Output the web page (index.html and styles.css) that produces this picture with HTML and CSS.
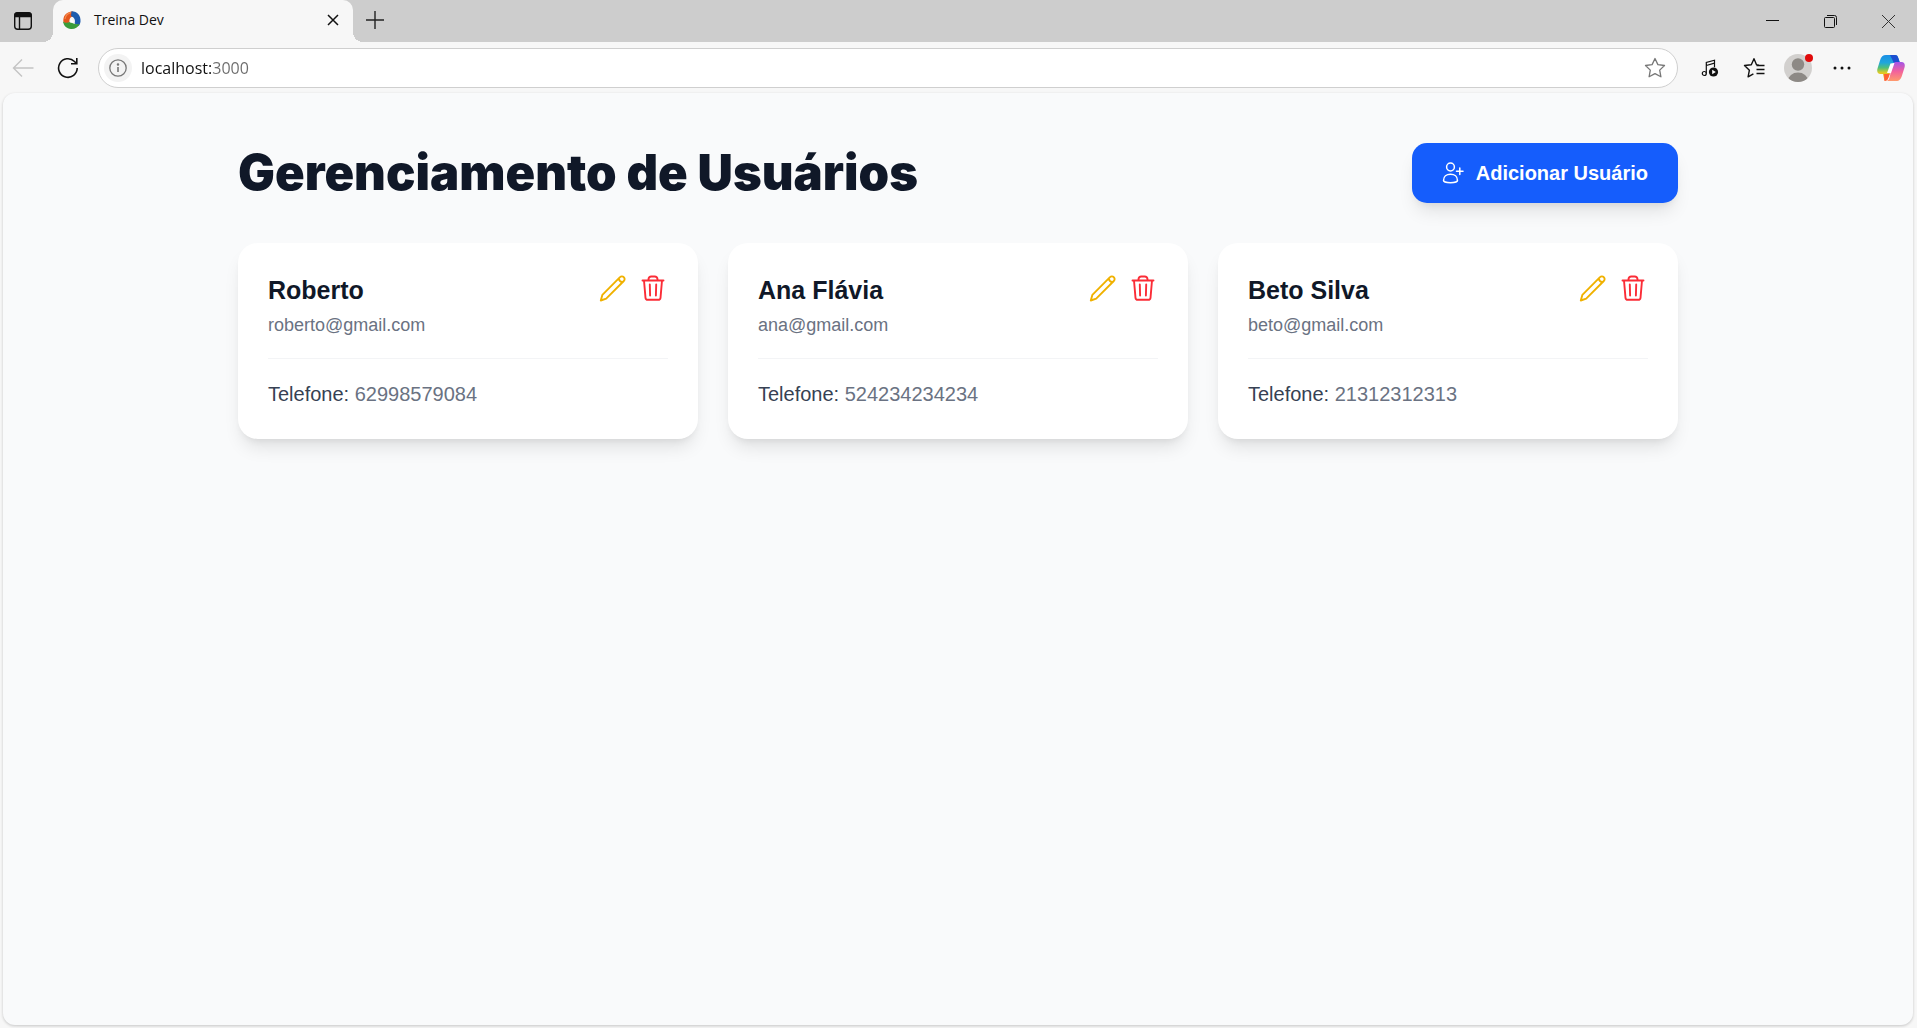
FILE: index.html
```html
<!DOCTYPE html>
<html lang="pt-BR">
<head>
<meta charset="utf-8">
<title>Treina Dev</title>
<link rel="stylesheet" href="styles.css">
</head>
<body>
<svg width="0" height="0" class="sprite" aria-hidden="true">
  <symbol id="pencil" viewBox="0 0 30 30"><path d="M2.800 27.500 4.400 21.800 22 4.200a2.600 2.600 0 0 1 3.800 0 2.600 2.600 0 0 1 0 3.800L8.200 25.600z M20.800 5.600q.5 3.200 3.900 3.700"/></symbol>
  <symbol id="trash" viewBox="0 0 30 30"><path d="M4.500 7.500h21M6 7.500l1.500 17.300a2.300 2.300 0 0 0 2.300 2h10.400a2.300 2.300 0 0 0 2.300-2l1.500-17.300M10.500 7.200v-1a2.700 2.700 0 0 1 2.700-2.700h3.600a2.700 2.700 0 0 1 2.700 2.700v1M11.800 11.500l.3 11M18.200 11.500l-.3 11"/></symbol>
</svg>
<div class="window">
  <header class="tabbar">
    <button class="chrome-btn workspace" aria-label="Guias"><svg width="20" height="20" viewBox="0 0 20 20" fill="none" stroke="#111" stroke-width="1.400"><rect x="1.700" y="1.700" width="16.600" height="16.600" rx="3"/><path d="M6.500 6v12"/><path d="M2 5.500V4a2 2 0 0 1 2-2h12a2 2 0 0 1 2 2v1.500z" fill="#111"/></svg></button>
    <div class="tab">
      <svg width="20" height="20" viewBox="0 0 20 20"><path d="M1.500 12.500C.5 6 4 2 10.500 1.200L13 7c-4-1-6 1-5.500 5.500-2 1-4 1-6 0z" fill="#e4561d"/><path d="M9.500 1.200c6 0 9.500 4.500 9 10.300-.2 2-.8 3.200-1.800 4.500l-4-2.500c1-3.500-.2-6-3.700-7.500z" fill="#1d5cae"/><path d="M1 11.500c2.500 2 5 1.200 7 .5 2.500 1.500 5.500 2.500 9.500 2-1.500 3.500-5 5.300-8.500 5C4.500 18.500 1.800 16 1 11.500z" fill="#3a9c3b"/><path d="m9.300 8.500 2.200 3.800-3.300.4z" fill="#fff"/><path d="M3 9C3.500 5.500 6 3.200 9 2.600" fill="none" stroke="#f58a4c" stroke-width="1.200"/></svg>
      <span class="tab-title">Treina Dev</span>
      <button class="chrome-btn tab-close" aria-label="Fechar guia"><svg width="12" height="12" viewBox="0 0 12 12" fill="none" stroke="#111" stroke-width="1.500"><path d="m1 1 10 10M11 1 1 11"/></svg></button>
    </div>
    <button class="chrome-btn new-tab" aria-label="Nova guia"><svg width="18" height="18" viewBox="0 0 18 18" fill="none" stroke="#222" stroke-width="1.400"><path d="M9 0v18M0 9h18"/></svg></button>
    <div class="window-controls">
      <button class="chrome-btn" aria-label="Minimizar"><svg width="13" height="13" viewBox="0 0 13 13" stroke="#111"><path d="M0 5.500h13"/></svg></button>
      <button class="chrome-btn" aria-label="Restaurar"><svg width="13" height="13" viewBox="0 0 13 13" fill="none" stroke="#111"><rect x=".5" y="2.500" width="10" height="10" rx="1"/><path d="M3 .5h7.500a2 2 0 0 1 2 2V10"/></svg></button>
      <button class="chrome-btn" aria-label="Fechar"><svg width="13" height="13" viewBox="0 0 13 13" fill="none" stroke="#333"><path d="m0 0 13 13M13 0 0 13"/></svg></button>
    </div>
  </header>
  <nav class="toolbar">
    <div class="nav-buttons">
      <button class="chrome-btn" aria-label="Voltar"><svg width="22" height="20" viewBox="0 0 22 20" fill="none" stroke="#c4c4c4" stroke-width="1.400"><path d="M21.500 10H1.500M10 1.500 1.500 10l8.500 8.500"/></svg></button>
      <button class="chrome-btn" aria-label="Atualizar"><svg width="22" height="22" viewBox="0 0 22 22" fill="none" stroke="#111" stroke-width="1.600"><path d="M20.200 11A9.300 9.300 0 1 1 17.500 4.500L19.500 6.500M19.800 1v5.700H14"/></svg></button>
    </div>
    <div class="address">
      <button class="chrome-btn site-info" aria-label="Informações do site"><svg width="18" height="18" viewBox="0 0 18 18" fill="none" stroke="#777" stroke-width="1.300"><circle cx="9" cy="9" r="8.200"/><path d="M9 8v5" stroke-width="1.600"/><circle cx="9" cy="5.500" r=".6" fill="#777"/></svg></button>
      <input class="url" type="text" value="localhost:3000" aria-label="Endereço">
      <button class="chrome-btn" aria-label="Favoritar"><svg width="22" height="22" viewBox="0 0 22 22" fill="none" stroke="#777" stroke-width="1.300" stroke-linejoin="round"><path d="m11 1.500 2.900 6.100 6.600.9-4.800 4.600 1.200 6.700L11 16.600l-5.900 3.200 1.200-6.700L1.500 8.500l6.600-.9z"/></svg></button>
    </div>
    <div class="tools">
      <button class="chrome-btn" aria-label="Mídia"><svg width="18" height="18" viewBox="0 0 18 18" fill="none" stroke="#111" stroke-width="1.200"><path d="M5.300 14.500V3.500l8.200-2.300v7M5.300 6.500l8.200-2.300"/><circle cx="3.300" cy="14.500" r="2"/><circle cx="12.500" cy="13" r="4.600" fill="#111" stroke="none"/><path d="m11.200 10.800 3.600 2.200-3.600 2.200z" fill="#fff" stroke="none"/></svg></button>
      <button class="chrome-btn" aria-label="Favoritos"><svg width="22" height="22" viewBox="0 0 22 22" fill="none" stroke="#111" stroke-width="1.400" stroke-linejoin="round"><path d="M16 8.200l-2.500-.4L11 1.700 8.300 7.700l-6.800.8 4.900 4.700-1.300 6.600 5.300-3M13.500 8.500h8M13.500 12.500h8M13.500 16.500h8"/></svg></button>
      <button class="chrome-btn" aria-label="Perfil"><span class="avatar"><svg width="28" height="28" viewBox="0 0 28 28"><defs><clipPath id="face"><circle cx="14" cy="14" r="14"/></clipPath></defs><g clip-path="url(#face)"><rect width="28" height="28" fill="#d2d0ce"/><circle cx="14" cy="10.500" r="6.200" fill="#8d8985"/><ellipse cx="14" cy="27" rx="10" ry="8.500" fill="#8d8985"/></g></svg><span class="badge"></span></span></button>
      <button class="chrome-btn" aria-label="Configurações"><svg width="18" height="18" viewBox="0 0 18 18" fill="#111"><circle cx="2" cy="9" r="1.500"/><circle cx="9" cy="9" r="1.500"/><circle cx="16" cy="9" r="1.500"/></svg></button>
      <button class="chrome-btn copilot" aria-label="Copilot"><svg width="28" height="26" viewBox="0 0 28 26"><defs><linearGradient id="ca" x1="0" y1="0" x2="0" y2="1"><stop offset="0" stop-color="#1b8fe6"/><stop offset=".3" stop-color="#1fa6dc"/><stop offset=".5" stop-color="#4fbf7a"/><stop offset=".7" stop-color="#e3cc22"/><stop offset="1" stop-color="#ff8a2a"/></linearGradient><linearGradient id="cb" x1="0" y1="0" x2="0" y2="1"><stop offset="0" stop-color="#a355e8"/><stop offset=".5" stop-color="#f2629c"/><stop offset="1" stop-color="#ff9a6c"/></linearGradient></defs><path d="M12 0h6c2 0 2.700 1.200 3.300 3L23 8h-5c-2 0-2.800 1-3.400 3L12 20c-1 4-1.800 5.500-4.500 5.500L6 19H3.500C.5 19-.3 16.500.5 13.500L3 5.500C4 1.700 6 0 9 0z" fill="url(#ca)"/><path d="M13 0h5c2 0 2.700 1.200 3.300 3L23 8h-5c-1.500 0-2-1-2.500-3z" fill="#1c4fd0"/><path d="M7 19h4c2 0 2.500-1.500 3-3l-2.500 6.500c-.7 2.500-2 3.500-4 3.500z" fill="#ff6035"/><path d="M19 7h5.500c3 0 3.800 2.500 3 5.500l-2.500 8c-1 3.500-2.500 5.500-6 5.500H9c2 0 3-1.500 3.500-3.500L15.500 11C16.200 8.500 17 7 19 7z" fill="url(#cb)"/><path d="m13.500 8.500 4-.5-3.500 10h-4z" fill="#fff"/></svg></button>
    </div>
  </nav>
  <main class="page">
    <div class="container">
      <div class="page-head">
        <h1>Gerenciamento de Usuários</h1>
        <button class="add"><svg width="22" height="22" viewBox="0 0 22 22" fill="none" stroke="#fff" stroke-width="1.500" stroke-linecap="round"><circle cx="8.500" cy="5" r="3.900"/><path d="M1.500 18.500c0-4 3-6.200 7-6.200s7 2.200 7 6.200c0 1-2.500 2.300-7 2.300s-7-1.300-7-2.300zM17.800 6v6.500M14.500 9.200h6.500"/></svg>Adicionar Usuário</button>
      </div>
      <div class="cards">
        <article class="card">
          <div class="card-head"><div><h2>Roberto</h2><p class="email">roberto@gmail.com</p></div>
            <div class="actions"><button class="edit" aria-label="Editar"><svg><use href="#pencil"/></svg></button><button class="delete" aria-label="Excluir"><svg><use href="#trash"/></svg></button></div></div>
          <p class="phone">Telefone: <span>62998579084</span></p>
        </article>
        <article class="card">
          <div class="card-head"><div><h2>Ana Flávia</h2><p class="email">ana@gmail.com</p></div>
            <div class="actions"><button class="edit" aria-label="Editar"><svg><use href="#pencil"/></svg></button><button class="delete" aria-label="Excluir"><svg><use href="#trash"/></svg></button></div></div>
          <p class="phone">Telefone: <span>524234234234</span></p>
        </article>
        <article class="card">
          <div class="card-head"><div><h2>Beto Silva</h2><p class="email">beto@gmail.com</p></div>
            <div class="actions"><button class="edit" aria-label="Editar"><svg><use href="#pencil"/></svg></button><button class="delete" aria-label="Excluir"><svg><use href="#trash"/></svg></button></div></div>
          <p class="phone">Telefone: <span>21312312313</span></p>
        </article>
      </div>
    </div>
  </main>
</div>
</body>
</html>
```
FILE: styles.css
```css
* { box-sizing: border-box; }
body { margin: 0; font-family: "Liberation Sans", Arial, sans-serif; }
h1, h2, p { margin: 0; }
button { border: 0; padding: 0; background: none; font: inherit; cursor: pointer; }
svg { display: block; flex: none; }
.sprite { position: absolute; }

.window { display: flex; flex-direction: column; min-height: 100vh; background: #f7f7f7; }

/* Browser chrome */
.chrome-btn { display: grid; place-items: center; flex: none; }
.tabbar { display: flex; align-items: stretch; height: 42px; background: #cdcdcd; font-family: "Open Sans", "Segoe UI", sans-serif; }
.workspace { width: 53px; padding-right: 7px; }
.tab { position: relative; display: flex; align-items: center; gap: 12px; width: 300px; padding: 0 14px 3px 9px; background: #f7f7f7; border-radius: 10px 10px 0 0; }
.tab::before, .tab::after { content: ""; position: absolute; bottom: 0; width: 10px; height: 10px; }
.tab::before { right: 100%; background: radial-gradient(circle at 0 0, transparent 10px, #f7f7f7 10px); }
.tab::after { left: 100%; background: radial-gradient(circle at 100% 0, transparent 10px, #f7f7f7 10px); }
.tab-title { flex: 1; font-size: 14px; color: #111; }
.new-tab { width: 44px; padding-bottom: 3px; }
.window-controls { display: flex; margin-left: auto; }
.window-controls .chrome-btn { width: 58px; }

.toolbar { display: flex; align-items: center; gap: 10px; height: 51px; padding: 0 12px; }
.nav-buttons { display: flex; gap: 23px; padding-right: 9px; }
.address { display: flex; flex: 1; align-items: center; gap: 9px; height: 40px; padding: 0 11px 0 5px; background: #fff; border: 1px solid #cfcfcf; border-radius: 20px; }
.site-info { width: 28px; height: 28px; border-radius: 50%; background: #f3f3f3; }
.url { flex: 1; min-width: 0; padding: 0; border: 0; outline: 0; font: 16px "Open Sans", "Segoe UI", sans-serif; color: transparent; background: linear-gradient(90deg, #111 72px, #6b6b6b 72px); -webkit-background-clip: text; background-clip: text; }
.tools { display: flex; align-items: center; }
.tools .chrome-btn { width: 44px; }
.tools .copilot { width: 28px; margin-left: 13px; }
.avatar { position: relative; }
.badge { position: absolute; top: 0; right: -1px; width: 8px; height: 8px; border-radius: 50%; background: #e00b0b; }

/* Page */
.page { flex: 1; margin: 0 4px 3px 3px; padding: 50px 24px; background: #f9fafb; border-radius: 12px; box-shadow: 0 1px 3px rgba(0, 0, 0, .2); }
.container { max-width: 1440px; margin: 0 auto; }
.page-head { display: flex; align-items: center; justify-content: space-between; margin-bottom: 40px; }
h1 { font: 900 49px/50px Inter, "Arial Black", sans-serif; color: #101828; }
.add { display: flex; align-items: center; gap: 12px; height: 60px; padding: 0 30px; border-radius: 15px; background: #155dfc; color: #fff; font-size: 20px; font-weight: 700; box-shadow: 0 12px 18px -4px rgba(0, 0, 0, .1), 0 5px 8px -5px rgba(0, 0, 0, .1); }

.cards { display: grid; grid-template-columns: repeat(3, 1fr); gap: 30px; }
.card { padding: 30px; border-radius: 20px; background: #fff; box-shadow: 0 12px 18px -4px rgba(0, 0, 0, .1), 0 5px 8px -5px rgba(0, 0, 0, .1); }
.card-head { display: flex; align-items: flex-start; justify-content: space-between; padding-bottom: 20px; border-bottom: 1px solid #f3f4f6; }
h2 { font-size: 25px; line-height: 35px; color: #101828; }
.email { margin-top: 5px; font-size: 18px; line-height: 25px; color: #6a7282; }
.actions { display: flex; gap: 10px; }
.actions svg { width: 30px; height: 30px; fill: none; stroke: currentColor; stroke-width: 1.9; stroke-linecap: round; stroke-linejoin: round; }
.edit { color: #f0b100; }
.delete { color: #fb2c36; }
.phone { padding-top: 20px; font-size: 20px; line-height: 30px; color: #364153; }
.phone span { color: #6a7282; }
```
